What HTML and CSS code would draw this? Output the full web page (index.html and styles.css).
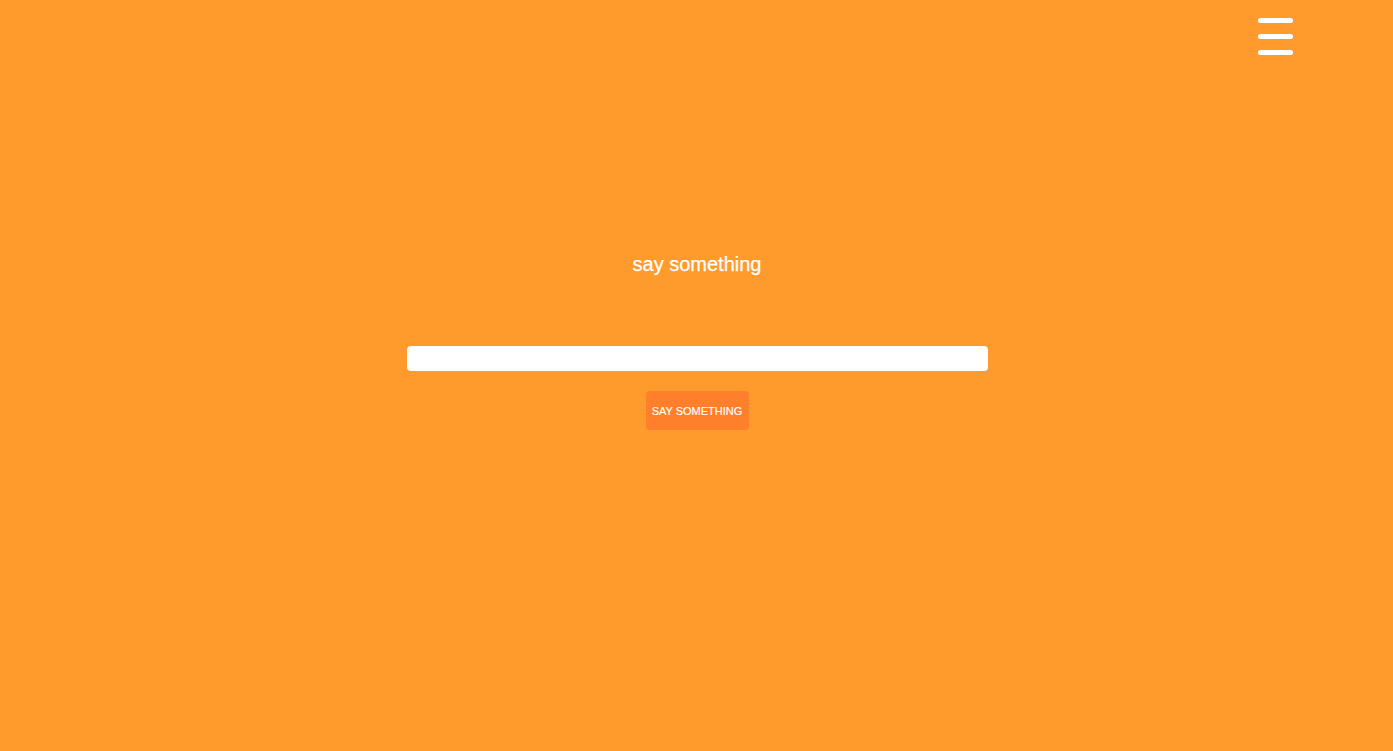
FILE: index.html
```html
<!DOCTYPE html>
<html>
<head>
<meta charset="utf-8">
<link rel="stylesheet" href="styles.css">
</head>
<body>
<header class="topbar">
  <button class="menu" aria-label="menu">
    <span class="bar"></span>
    <span class="bar"></span>
    <span class="bar"></span>
  </button>
</header>
<main class="main">
  <h1 class="title">say something</h1>
  <form class="form">
    <input class="field" type="text">
    <button class="submit" type="button">SAY SOMETHING</button>
  </form>
</main>
</body>
</html>
```

FILE: styles.css
```css
html, body {
  margin: 0;
  padding: 0;
  height: 100%;
}
body {
  background: #ff9a2c;
  font-family: "Liberation Sans", Arial, sans-serif;
  color: #fff;
  overflow: hidden;
}
.topbar {
  display: flex;
  justify-content: flex-end;
  padding: 18px 100px 0 0;
}
.menu {
  display: flex;
  flex-direction: column;
  gap: 11px;
  padding: 0;
  border: 0;
  background: none;
  cursor: pointer;
}
.bar {
  display: block;
  width: 35px;
  height: 5px;
  border-radius: 3px;
  background: #fff;
}
.main {
  display: flex;
  flex-direction: column;
  align-items: center;
  padding-top: 197px;
  padding-left: 1px;
}
.title {
  margin: 0;
  font-size: 20px;
  font-weight: normal;
  line-height: 24px;
  -webkit-text-stroke: 0.25px #fff;
}
.form {
  display: flex;
  flex-direction: column;
  align-items: center;
  margin-top: 70px;
  gap: 20px;
}
.field {
  width: 581px;
  height: 25px;
  box-sizing: border-box;
  border: 0;
  border-radius: 4px;
  background: #fff;
}
.submit {
  width: 103px;
  height: 39px;
  border: 0;
  border-radius: 4px;
  background: #ff7f2a;
  color: #fff;
  font-family: "Liberation Sans", Arial, sans-serif;
  font-size: 11px;
  padding: 0;
  -webkit-text-stroke: 0.15px #fff;
}
```
